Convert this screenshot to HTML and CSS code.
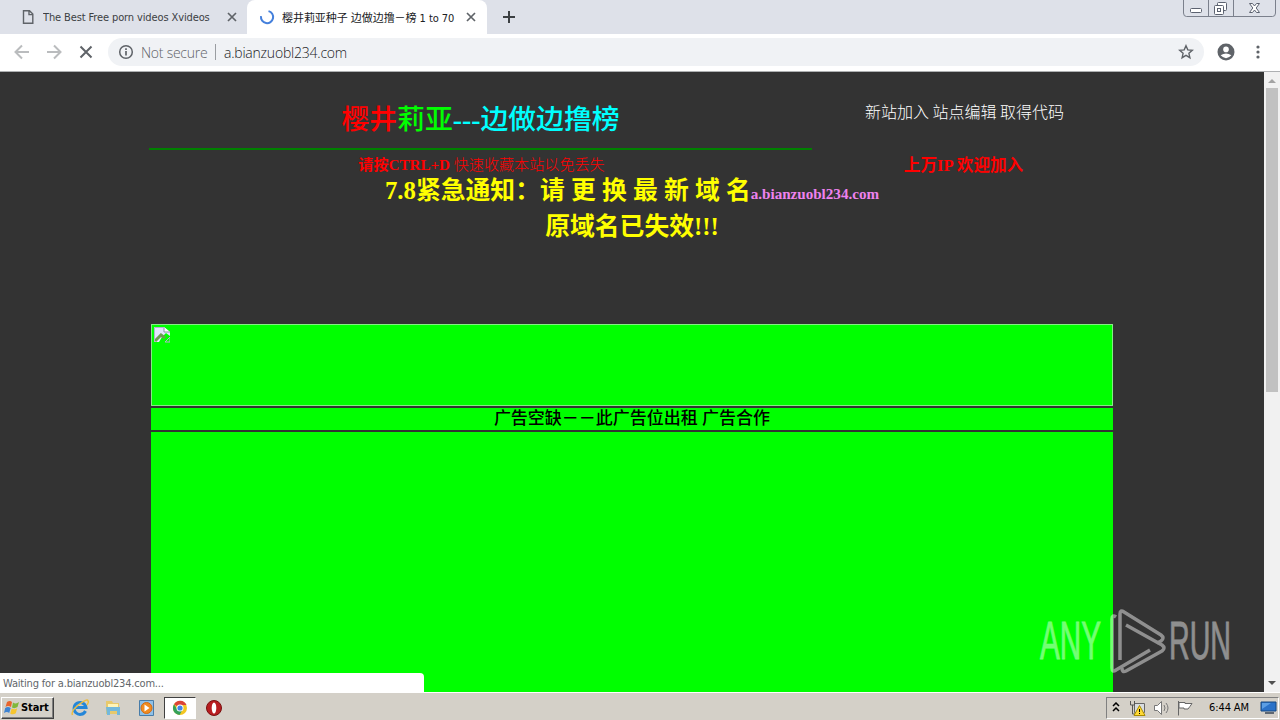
FILE: index.html
```html
<!DOCTYPE html>
<html lang="zh-CN">

<head>
    <meta charset="UTF-8">
    <title>樱井莉亚种子 边做边撸－榜 1 to 70</title>
    <link rel="stylesheet" href="styles.css">
</head>

<body>
    <div class="screen">
        <!-- Tabs -->
        <div class="tab-strip">
            <div class="tab">
                <svg class="tab-icon" width="16" height="16" viewBox="0 0 16 16" fill="none" stroke="#5f6368" stroke-width="1.4"><path d="M3.5 1.7h6l3.3 3.4v9.2H3.5zM9 2v3.6h3.6" /></svg>
                <span class="tab-title first-title">The Best Free porn videos Xvideos</span>
                <svg class="tab-close" width="10" height="10" viewBox="0 0 10 10" stroke="#5f6368" stroke-width="1.7"><path d="M1 1l8 8M9 1l-8 8" /></svg>
            </div>
            <div class="tab active">
                <svg class="tab-icon" width="16" height="16" viewBox="0 0 16 16" fill="none" stroke="#4580dc" stroke-width="2"><path d="M9.5 2.1A6.1 6.1 0 1 1 2 7.2" /></svg>
                <span class="tab-title second-title">樱井莉亚种子 边做边撸－榜 1 to 70</span>
                <svg class="tab-close" width="10" height="10" viewBox="0 0 10 10" stroke="#5f6368" stroke-width="1.7"><path d="M1 1l8 8M9 1l-8 8" /></svg>
            </div>
            <svg class="new-tab" width="12" height="12" viewBox="0 0 12 12" stroke="#3c4043" stroke-width="2"><path d="M6 0v12M0 6h12" /></svg>
            <svg class="window-buttons" width="94" height="18" viewBox="0 0 94 18" fill="none" stroke="#7b808c">
                <path d="M.5 0v13q0 3.5 3 3.5h86q3 0 3-3.5V0M25.500 0v16M50.500 0v16" />
                <g stroke="#5c6270" fill="#fff">
                    <rect x="7.500" y="8.500" width="11" height="4" rx="1" />
                    <rect x="34.500" y="2.500" width="9" height="8" rx="1" />
                    <rect x="31.500" y="5.500" width="9" height="9" rx="1" />
                    <rect x="34.500" y="8.500" width="3" height="3" />
                    <path d="M66.500 3.500h3l2 2.500 2-2.500h3l-3.300 4.500 3.300 4.500h-3l-2-2.500-2 2.500h-3l3.300-4.500z" />
                </g>
            </svg>
        </div>

        <!-- Toolbar -->
        <div class="toolbar">
            <svg width="16" height="16" viewBox="0 0 16 16" fill="none" stroke="#babcbe" stroke-width="2"><path d="M15 8H2M8 1.500L1.500 8 8 14.500" /></svg>
            <svg width="16" height="16" viewBox="0 0 16 16" fill="none" stroke="#babcbe" stroke-width="2"><path d="M1 8h13M8 1.500L14.500 8 8 14.500" /></svg>
            <svg width="16" height="16" viewBox="0 0 16 16" fill="none" stroke="#5f6368" stroke-width="2"><path d="M2.500 2.500l11 11M13.500 2.500l-11 11" /></svg>
            <div class="omnibox">
                <svg width="16" height="16" viewBox="0 0 16 16" fill="none" stroke="#5f6368" stroke-width="1.500"><circle cx="8" cy="8" r="6.300" /><path d="M8 7v4.500M8 4.300v1.600" stroke-width="1.700" /></svg>
                <span class="secure-label">Not secure</span>
                <span class="divider"></span>
                <span class="url">a.bianzuobl234.com</span>
                <svg class="star" width="16" height="16" viewBox="0 0 16 16" fill="none" stroke="#5f6368" stroke-width="1.400"><path d="M8 1.700l1.800 4.200 4.500.4-3.400 3 1 4.400L8 11.400l-3.900 2.300 1-4.400-3.400-3 4.500-.4z" /></svg>
            </div>
            <svg class="avatar" width="18" height="18" viewBox="0 0 18 18"><circle cx="9" cy="9" r="8.500" fill="#5f6368" /><circle cx="9" cy="6.400" r="2.800" fill="#fff" /><path d="M3.600 12.300Q9 8.600 14.400 12.300 9 18 3.600 12.300z" fill="#fff" /></svg>
            <svg class="menu-dots" width="4" height="14" viewBox="0 0 4 14" fill="#5f6368"><circle cx="2" cy="2" r="1.600" /><circle cx="2" cy="7" r="1.600" /><circle cx="2" cy="12" r="1.600" /></svg>
        </div>

        <!-- Web page -->
        <div class="viewport">
            <div class="page">
                <div class="header">
                    <div class="header-left">
                        <h1><span class="red">樱井</span><span class="green">莉亚</span><span class="cyan"><b>---</b>边做边撸榜</span></h1>
                        <p class="shortcut"><b>请按CTRL+D</b> 快速收藏本站以免丢失</p>
                    </div>
                    <div class="header-right">
                        <p class="links">新站加入 站点编辑 取得代码</p>
                        <p class="welcome">上万IP 欢迎加入</p>
                    </div>
                </div>
                <div class="notice">
                    <p>7.8紧急通知：请 更 换 最 新 域 名<span class="domain">a.bianzuobl234.com</span></p>
                    <p>原域名已失效!!!</p>
                </div>
                <div class="ads">
                    <div class="banner">
                        <svg width="16" height="16" viewBox="0 0 16 16"><path d="M0 0h10l6 5v4l-4-3-4 4-3 5H0z" fill="#e4e3ff" /><path d="M10 0v5h6" fill="#fff" stroke="#8c91ab" /><path d="M1 14l6-6 4 3" fill="none" stroke="#6b9d50" stroke-width="3" /><path d="M.5 15V.5h9M13 13l3-3v5h-5z" fill="none" stroke="#b4b4cf" /></svg>
                    </div>
                    <div class="ad-title">广告空缺－－此广告位出租 广告合作</div>
                    <div class="ad-space"></div>
                </div>
            </div>
            <div class="scrollbar">
                <svg width="16" height="16" viewBox="0 0 16 16"><path d="M4 11l4-4 4 4z" fill="#a3a3a3" /></svg>
                <div class="thumb"></div>
                <svg class="scroll-down" width="16" height="16" viewBox="0 0 16 16"><path d="M4 5h8l-4 4z" fill="#505050" /></svg>
            </div>
            <div class="status">Waiting for a.bianzuobl234.com...</div>
            <svg class="watermark" width="202" height="64" viewBox="0 0 202 64">
                <g fill="#fff" stroke="#fff" stroke-width="0.8">
                    <text x="2" y="50" textLength="61" lengthAdjust="spacingAndGlyphs">ANY</text>
                    <text x="131" y="50" textLength="62" lengthAdjust="spacingAndGlyphs">RUN</text>
                </g>
                <g fill="none" stroke="#fff" stroke-width="3.500" stroke-linejoin="round">
                    <path d="M78 8q-4-3-4 2v49q0 5 4 2l34-20" />
                    <path d="M82 51V5q0-5 4-2l37 23q4 3 0 6l-4 2" />
                    <path d="M88 16l36 20q4 3 0 6L88 62q-4 2-4-3" />
                </g>
            </svg>
        </div>

        <!-- Taskbar -->
        <div class="taskbar">
            <div class="start">
                <svg width="16" height="16" viewBox="0 0 16 16"><path d="M3 2q3-2 5 0L7 7Q4 5 1.500 7z" fill="#e8642c" /><path d="M9 2.500q3 2 6-.5l-1.500 5q-3 2-5.500.5z" fill="#80b83b" /><path d="M1.200 8Q4 6 6.700 8l-1.500 5Q3 11 0 13z" fill="#3e83d2" /><path d="M7.700 8.500q3 1.500 5.500-.2l-1.400 5q-3 2-5.600.2z" fill="#f6c52e" /></svg>
                <span>Start</span>
            </div>
            <div class="quick-launch">
                <svg width="18" height="18" viewBox="0 0 18 18" fill="none"><path d="M14.500 12A6 6 0 1 1 15 8.500H5" stroke="#2486d8" stroke-width="3" /><path d="M1.500 16Q-.5 12 8 5.500T17 2q1 1-1 4" stroke="#edbd3f" stroke-width="1.500" /></svg>
                <svg width="18" height="18" viewBox="0 0 18 18"><path d="M2 2h6l1 2h6v11H2z" fill="#e8c96c" /><path d="M4 5h10v5H4z" fill="#fff4b8" /><path d="M2 8h14v8h-3v-4H6v4H3z" fill="#73b8dc" /></svg>
                <svg width="18" height="18" viewBox="0 0 18 18"><path d="M2.500 1.500h14v15h-14z" fill="#8fc1e7" stroke="#477ca9" /><circle cx="9.500" cy="9" r="5.500" fill="#f08b20" stroke="#d36c12" /><path d="M7.500 5.500l5 3.500-5 3.500z" fill="#fff" /></svg>
                <div class="running">
                    <svg width="16" height="16" viewBox="0 0 16 16"><circle cx="8" cy="8" r="7" fill="#f3c623" /><path d="M8 8L2 4.300A7 7 0 0 1 14.500 5H8z" fill="#dc4437" /><path d="M2 4.300A7 7 0 0 0 7.500 15L11 9H5z" fill="#35a15a" /><circle cx="8" cy="8" r="3.500" fill="#fff" /><circle cx="8" cy="8" r="2.600" fill="#4285e9" /></svg>
                </div>
                <svg width="18" height="18" viewBox="0 0 18 18"><circle cx="9" cy="9" r="7.500" fill="#b81d20" stroke="#791010" /><ellipse cx="9" cy="9" rx="2.300" ry="5.500" fill="#fff" /></svg>
            </div>
            <div class="tray">
                <svg width="8" height="12" viewBox="0 0 8 12" fill="none" stroke="#000" stroke-width="1.500"><path d="M1 4l3-3 3 3M1 9l3-3 3 3" /></svg>
                <svg class="network" width="17" height="16" viewBox="0 0 17 16"><path d="M5.500 3.500h10v9h-10z" fill="#d7dce0" stroke="#666" /><path d="M1.500 1v4h4V1M3.500 5v9h5" fill="none" stroke="#555" /><path d="M10.500 5.500l5.500 10H5z" fill="#ffd936" stroke="#a98a00" /><path d="M10.500 9v3M10.500 13v1" stroke="#000" /></svg>
                <svg class="sound" width="17" height="16" viewBox="0 0 17 16" fill="none" stroke="#777"><path d="M1.500 5.500h3l4-4v13l-4-4h-3z" fill="#fff" /><path d="M11 5q2 3 0 6M13 3q4 5 0 10" /></svg>
                <svg class="flag" width="17" height="16" viewBox="0 0 17 16" fill="#fff" stroke="#666"><path d="M1.500 1v14.500M2 2.500h6v1h7q-2 3-4 5.500H7v-1H2z" /></svg>
                <span class="clock">6:44 AM</span>
                <svg class="desktop" width="17" height="15" viewBox="0 0 17 15"><path d="M1 2h15v9H1z" fill="#2b72c8" stroke="#174880" /><path d="M2 3h9L2 9z" fill="#5b9ee4" /><path d="M5 13h9" stroke="#5f6872" stroke-width="2" /></svg>
            </div>
        </div>
    </div>
</body>

</html>
```

FILE: styles.css
```css
* {
    margin: 0;
    padding: 0;
    box-sizing: border-box;
}

body {
    width: 1280px;
    height: 720px;
    overflow: hidden;
    font-family: "DejaVu Sans Condensed", "Noto Sans CJK SC", sans-serif;
}

svg {
    display: block;
    flex-shrink: 0;
}

.screen {
    display: flex;
    flex-direction: column;
    height: 720px;
}

.tab-strip {
    display: flex;
    height: 34px;
    background: #dee1e9;
}

.tab {
    display: flex;
    align-items: center;
    width: 247px;
    padding-left: 20px;
}

.tab.active {
    width: 240px;
    padding-left: 12px;
    background: #fff;
    border-radius: 8px 8px 0 0;
}

.tab-title {
    margin-left: 7px;
    font-size: 11px;
    color: #3c4043;
    white-space: nowrap;
    overflow: hidden;
}

.first-title {
    width: 184px;
    letter-spacing: -0.12px;
}

.second-title {
    width: 184px;
    letter-spacing: -0.05px;
    color: #202124;
}

.new-tab {
    margin: 11px 0 0 16px;
}

.window-buttons {
    margin-left: auto;
    margin-right: 3px;
}

.toolbar {
    display: flex;
    align-items: center;
    gap: 16px;
    height: 38px;
    padding: 0 19px 1px 14px;
    background: #fff;
    border-bottom: 1px solid #aeb0b2;
}

.omnibox {
    display: flex;
    align-items: center;
    width: 1096px;
    height: 28px;
    margin-left: -2px;
    padding: 0 10px;
    margin-right: -3px;
    border-radius: 14px;
    background: #f0f2f5;
    font-family: "Open Sans", sans-serif;
    font-size: 14px;
}

.secure-label {
    width: 67px;
    margin-left: 7px;
    color: #5f6368;
    font-weight: 300;
    letter-spacing: -0.25px;
    white-space: nowrap;
}

.divider {
    width: 1px;
    height: 16px;
    margin: 0 8px 0 7px;
    background: #9a9da1;
}

.url {
    color: #202124;
    font-weight: 300;
    letter-spacing: -0.22px;
}

.star {
    margin-left: auto;
}

.menu-dots {
    margin-left: 5px;
}

.viewport {
    position: relative;
    display: flex;
    height: 620px;
    background: #333;
}

.page {
    width: 1264px;
    height: 620px;
    padding: 0 151px;
    overflow: hidden;
    font-family: "Liberation Serif", "Noto Sans CJK SC", serif;
}

.header {
    display: flex;
    height: 101px;
    white-space: nowrap;
    text-align: center;
}

.header-left {
    flex-shrink: 0;
    width: 663px;
    margin-left: -2px;
}

h1 {
    height: 78px;
    padding-top: 28px;
    border-bottom: 2px solid #008000;
    font-size: 27.8px;
    line-height: 40px;
    font-weight: 500;
}

.red {
    color: #f00;
}

.green {
    color: #0f0;
}

.cyan {
    color: #0ff;
}

.shortcut {
    height: 22px;
    padding: 4px 0 0 2px;
    color: #f00;
    font-size: 15.1px;
    line-height: 22px;
    font-weight: 300;
}

.shortcut b {
    font-weight: bold;
}

.header-right {
    flex-shrink: 0;
    width: 303px;
}

.links {
    height: 78px;
    padding: 29px 0 0 2px;
    color: #fff;
    font-size: 16px;
    line-height: 24px;
    font-weight: 300;
    word-spacing: -0.5px;
}

.welcome {
    padding-top: 4px;
    color: #f00;
    font-size: 16.6px;
    line-height: 24px;
    font-weight: bold;
}

.notice {
    height: 151px;
    color: #ff0;
    font-size: 24.8px;
    font-weight: bold;
    text-align: center;
    white-space: nowrap;
}

.notice p {
    height: 36px;
    line-height: 36px;
}

.domain {
    color: #ee82ee;
    font-size: 15.1px;
    line-height: 1;
}

.ads {
    display: flex;
    flex-direction: column;
    gap: 2px;
}

.banner {
    height: 82px;
    padding: 2px;
    border: 1px solid #85ed85;
    background: #0f0;
}

.ad-title {
    height: 22px;
    background: #0f0;
    color: #000;
    font-size: 17px;
    line-height: 22px;
    font-weight: 500;
    text-align: center;
}

.ad-space {
    height: 262px;
    background: #0f0;
}

.scrollbar {
    display: flex;
    flex-direction: column;
    width: 16px;
    background: #f1f1f1;
}

.thumb {
    width: 12px;
    height: 304px;
    margin-left: 2px;
    background: #c1c1c1;
}

.scroll-down {
    margin-top: auto;
}

.status {
    position: absolute;
    left: 0;
    bottom: 0;
    width: 424px;
    height: 19px;
    padding-left: 3px;
    border-radius: 0 4px 0 0;
    background: #fff;
    color: #62666a;
    font-size: 11px;
    line-height: 21px;
    letter-spacing: -0.18px;
}

.watermark {
    position: absolute;
    left: 1038px;
    top: 537px;
    overflow: visible;
    opacity: 0.45;
    font-family: "Liberation Sans Narrow", "Liberation Sans", sans-serif;
    font-size: 54px;
}

.taskbar {
    display: flex;
    align-items: center;
    height: 28px;
    padding: 2px 1px 0;
    border-top: 1px solid #fff;
    background: #d4d0c8;
}

.start {
    display: flex;
    align-items: center;
    gap: 1px;
    width: 53px;
    height: 22px;
    padding-left: 2px;
    border: 1px solid;
    border-color: #fff #404040 #404040 #fff;
    box-shadow: inset -1px -1px #808080;
    font-size: 11px;
    font-weight: bold;
    letter-spacing: -0.1px;
}

.quick-launch {
    display: flex;
    align-items: center;
    gap: 15px;
    margin-left: 17px;
}

.running {
    display: flex;
    align-items: center;
    justify-content: center;
    width: 32px;
    height: 22px;
    margin: 0 -6px 0 -6px;
    border: 1px solid;
    border-color: #404040 #fff #fff #404040;
    background: #fff;
}

.tray {
    display: flex;
    align-items: center;
    width: 173px;
    height: 22px;
    margin-left: auto;
    padding-left: 5px;
    border: 1px solid;
    border-color: #808080 #fff #fff #808080;
}

.network {
    margin-left: 9px;
}

.sound {
    margin-left: 7px;
}

.flag {
    margin-left: 7px;
}

.clock {
    width: 51px;
    margin-left: 15px;
    font-size: 11px;
    letter-spacing: -0.1px;
    white-space: nowrap;
}
```
